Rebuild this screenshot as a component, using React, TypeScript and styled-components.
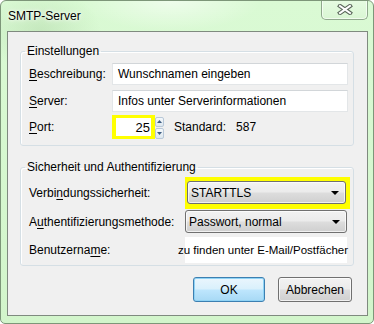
import styled, { createGlobalStyle } from "styled-components";

const GlobalStyle = createGlobalStyle`
  html, body {
    margin: 0;
    padding: 0;
    background: #ffffff;
  }
  body {
    font-family: "Liberation Sans", Arial, sans-serif;
    font-size: 12px;
    color: #000000;
  }
  * {
    box-sizing: border-box;
  }
`;

const Window = styled.div`
  width: 374px;
  height: 324px;
  display: flex;
  flex-direction: column;
  border: 1px solid #7d9679;
  border-radius: 6px 6px 5px 5px;
  background:
    radial-gradient(ellipse 60px 40px at 40px 30px, rgba(160, 200, 150, 0.35), transparent),
    radial-gradient(ellipse 90px 30px at 170px 0px, rgba(255, 255, 255, 0.55), transparent),
    linear-gradient(180deg, #dafad4 0%, #d2f5cb 100%);
  overflow: hidden;
`;

const TitleBar = styled.div`
  height: 30px;
  display: flex;
  justify-content: space-between;
  align-items: flex-start;
  flex-shrink: 0;
`;

const Title = styled.div`
  padding: 8px 0 0 7px;
  font-family: "Liberation Sans", Arial, sans-serif;
  font-size: 12px;
  line-height: 14px;
  text-shadow: 0 0 6px #ffffff, 0 0 3px #ffffff;
`;

const CloseButton = styled.div`
  width: 47px;
  height: 20px;
  margin: -1px 5px 0 0;
  border: 1px solid #8fa88c;
  border-top: none;
  border-radius: 0 0 5px 5px;
  background: linear-gradient(180deg, #e6fbe2 0%, #d9f6d3 100%);
  box-shadow: inset 0 0 0 1px rgba(255, 255, 255, 0.6);
  display: flex;
  align-items: center;
  justify-content: center;
`;

const Client = styled.div`
  flex: 0 0 285px;
  margin: 0 5px 0 6px;
  border: 1px solid #7f8a7f;
  background: #f0f0f0;
  padding: 0 13px 0 12px;
  display: flex;
  flex-direction: column;
`;

const Group = styled.fieldset<{ $top: number; $bottom: number }>`
  margin: ${(p) => p.$top}px 0 0 0;
  padding: 0 5px ${(p) => p.$bottom}px 8px;
  border: 1px solid #d5dfe5;
  border-radius: 3px;
  box-shadow: inset 1px 1px 0 #ffffff;
  min-width: 0;
`;

const Legend = styled.legend`
  padding: 0 2px;
  margin-left: -4px;
  line-height: 14px;
  font-size: 12px;
`;

const Row = styled.div<{ $h: number; $mt: number }>`
  display: flex;
  align-items: center;
  height: ${(p) => p.$h}px;
  margin-top: ${(p) => p.$mt}px;
`;

const Label = styled.div<{ $w: number }>`
  flex: 0 0 ${(p) => p.$w}px;
  white-space: nowrap;

  u {
    text-decoration-thickness: 1px;
    text-underline-offset: 2px;
  }
`;

const TextInput = styled.div`
  flex: 1;
  height: 22px;
  background: #ffffff;
  border: 1px solid #e3e6e8;
  border-top-color: #d2d6d9;
  padding-left: 5px;
  display: flex;
  align-items: center;
  white-space: nowrap;
`;

const YellowMark = styled.div<{ $pad: string }>`
  background: #ffff00;
  padding: ${(p) => p.$pad};
  display: flex;
`;

const PortInput = styled.div`
  width: 35px;
  height: 18px;
  background: #ffffff;
  text-align: right;
  padding-right: 1px;
  font-size: 13px;
  line-height: 19px;
`;

const Spinner = styled.div`
  width: 9px;
  height: 22px;
  display: flex;
  flex-direction: column;
  gap: 1px;
  margin-top: 1px;
`;

const SpinPart = styled.div`
  flex: 1;
  border: 1px solid #b8c8d8;
  border-radius: 2px;
  background: linear-gradient(180deg, #f4f8fb, #dde7ef);
  display: flex;
  align-items: center;
  justify-content: center;
`;

const Info = styled.span<{ $ml: number }>`
  margin-left: ${(p) => p.$ml}px;
`;

const Select = styled.div<{ $w: number }>`
  width: ${(p) => p.$w}px;
  height: 23px;
  border: 1px solid #707070;
  border-radius: 3px;
  background: linear-gradient(180deg, #f2f2f2 0%, #ebebeb 48%, #dddddd 52%, #cfcfcf 100%);
  box-shadow: inset 0 0 0 1px rgba(255, 255, 255, 0.7);
  display: flex;
  align-items: center;
  padding: 0 6px 0 3px;
  white-space: nowrap;
`;

const Arrow = styled.span`
  margin-left: auto;
  width: 0;
  height: 0;
  border-left: 4px solid transparent;
  border-right: 4px solid transparent;
  border-top: 4px solid #000000;
`;

const NoteBox = styled.div`
  width: 162px;
  height: 26px;
  background: #ffffff;
  display: flex;
  align-items: center;
`;

const Note = styled.span`
  margin-left: -7px;
  white-space: nowrap;
  font-size: 11.5px;
`;

const ButtonRow = styled.div`
  display: flex;
  justify-content: flex-end;
  gap: 13px;
  margin-top: 11px;
  padding-right: 2px;
`;

const Button = styled.div<{ $w: number; $default?: boolean }>`
  width: ${(p) => p.$w}px;
  height: 25px;
  border: 1px solid ${(p) => (p.$default ? "#3c7fb1" : "#707070")};
  border-radius: 3px;
  background: ${(p) =>
    p.$default
      ? "linear-gradient(180deg, #eaf6fd 0%, #d9f0fc 48%, #bee6fd 52%, #a7d9f5 100%)"
      : "linear-gradient(180deg, #f2f2f2 0%, #ebebeb 48%, #dddddd 52%, #cfcfcf 100%)"};
  box-shadow: inset 0 0 0 1px ${(p) => (p.$default ? "#8fd3f5" : "rgba(255,255,255,0.7)")};
  display: flex;
  align-items: center;
  justify-content: center;
`;

const CloseGlyph = () => (
  <svg width="16" height="11" viewBox="0 0 16 11">
    <path d="M3 2 L13 9 M13 2 L3 9" stroke="#5d6a5d" strokeWidth="4.2" strokeLinecap="square" />
    <path d="M3 2 L13 9 M13 2 L3 9" stroke="#ffffff" strokeWidth="2" strokeLinecap="square" />
  </svg>
);

const SpinArrow = ({ up }: { up?: boolean }) => (
  <svg width="5" height="3" viewBox="0 0 5 3">
    <path d={up ? "M0 3 L2.5 0 L5 3 Z" : "M0 0 L2.5 3 L5 0 Z"} fill="#3d5c80" />
  </svg>
);

export default function App() {
  return (
    <>
      <GlobalStyle />
      <Window>
        <TitleBar>
          <Title>SMTP-Server</Title>
          <CloseButton>
            <CloseGlyph />
          </CloseButton>
        </TitleBar>
        <Client>
          <Group $top={12} $bottom={6}>
            <Legend>Einstellungen</Legend>
            <Row $h={22} $mt={5}>
              <Label $w={83}>
                <u>B</u>eschreibung:
              </Label>
              <TextInput>Wunschnamen eingeben</TextInput>
            </Row>
            <Row $h={22} $mt={5}>
              <Label $w={83}>
                <u>S</u>erver:
              </Label>
              <TextInput>Infos unter Serverinformationen</TextInput>
            </Row>
            <Row $h={24} $mt={3}>
              <Label $w={83}>
                <u>P</u>ort:
              </Label>
              <YellowMark $pad="3px 4px 3px 4px">
                <PortInput>25</PortInput>
              </YellowMark>
              <Spinner>
                <SpinPart>
                  <SpinArrow up />
                </SpinPart>
                <SpinPart>
                  <SpinArrow />
                </SpinPart>
              </Spinner>
              <Info $ml={10}>Standard:</Info>
              <Info $ml={10}>587</Info>
            </Row>
          </Group>

          <Group $top={14} $bottom={2}>
            <Legend>Sicherheit und Authentifizierung</Legend>
            <Row $h={32} $mt={3}>
              <Label $w={156}>
                Verbi<u>n</u>dungssicherheit:
              </Label>
              <YellowMark $pad="4px 4px 5px 2px">
                <Select $w={159}>
                  STARTTLS
                  <Arrow />
                </Select>
              </YellowMark>
            </Row>
            <Row $h={23} $mt={1}>
              <Label $w={156}>
                A<u>u</u>thentifizierungsmethode:
              </Label>
              <Select $w={162}>
                Passwort, normal
                <Arrow />
              </Select>
            </Row>
            <Row $h={26} $mt={4}>
              <Label $w={156}>
                Benutzerna<u>m</u>e:
              </Label>
              <NoteBox>
                <Note>zu finden unter E-Mail/Postfächer</Note>
              </NoteBox>
            </Row>
          </Group>

          <ButtonRow>
            <Button $w={72} $default>
              OK
            </Button>
            <Button $w={74}>Abbrechen</Button>
          </ButtonRow>
        </Client>
      </Window>
    </>
  );
}
